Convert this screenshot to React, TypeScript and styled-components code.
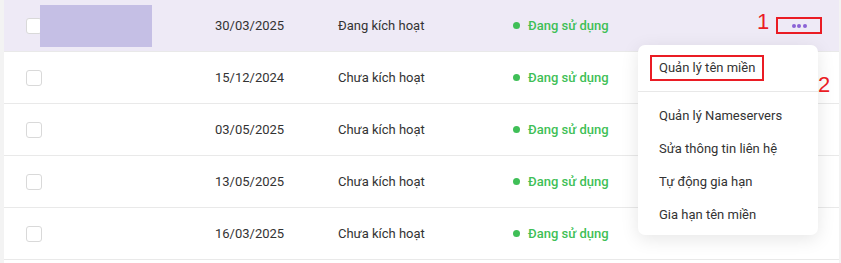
import React from "react";
import styled, { createGlobalStyle } from "styled-components";

const Global = createGlobalStyle`
  html, body { margin: 0; padding: 0; background: #f3f3f3; }
  body { font-family: Roboto, "Liberation Sans", Arial, sans-serif; }
  #root { width: 841px; height: 263px; overflow: hidden; }
`;

const Page = styled.div`
  position: relative;
  width: 835px;
  margin-left: 4px;
  height: 263px;
  background: #fff;
`;

const Row = styled.div<{ $active?: boolean }>`
  display: grid;
  grid-template-columns: 211px 123px 175px 263px 1fr;
  align-items: center;
  height: 51px;
  border-bottom: 1px solid #e9e9e9;
  background: ${(p) => (p.$active ? "#eeeaf6" : "#fff")};
  font-size: 13px;
  color: #333;
`;

const CheckCell = styled.div`
  display: flex;
  align-items: center;
  padding-left: 22px;
`;

const Checkbox = styled.span`
  display: inline-block;
  width: 14px;
  height: 14px;
  border: 1px solid #d9d9d9;
  border-radius: 3px;
  background: #fff;
`;

const Redacted = styled.span`
  display: inline-block;
  width: 112px;
  height: 42px;
  margin-left: -2px;
  background: #c5bfe5;
`;

const Cell = styled.div`
  white-space: nowrap;
`;

const Usage = styled.div`
  display: flex;
  align-items: center;
  gap: 8px;
  color: #3fbf57;
  font-weight: 500;
  white-space: nowrap;
`;

const Dot = styled.span`
  width: 7px;
  height: 7px;
  border-radius: 50%;
  background: #3fbf57;
`;

const ActionCell = styled.div`
  display: flex;
  align-items: center;
`;

const ActionWrap = styled.span`
  position: relative;
  display: inline-flex;
`;

const Mark = styled.span`
  color: #ea1c24;
  font-family: "Liberation Sans", Arial, sans-serif;
  font-size: 22px;
  line-height: 1;
`;

const MarkOne = styled(Mark)`
  position: absolute;
  left: -19px;
  top: -6px;
`;

const DotsBox = styled.span`
  display: flex;
  align-items: center;
  justify-content: center;
  gap: 1.5px;
  width: 42px;
  height: 13px;
  border: 2px solid #ea1c24;
`;

const MiniDot = styled.span`
  width: 4px;
  height: 4px;
  border-radius: 50%;
  background: #8b63d6;
`;

const Menu = styled.div`
  position: absolute;
  left: 634px;
  top: 45px;
  width: 180px;
  padding: 6px 0 4px;
  background: #fff;
  border-radius: 7px;
  box-shadow: 0 4px 18px rgba(0, 0, 0, 0.1);
  font-size: 13px;
  color: #333;
`;

const Item = styled.div`
  height: 33px;
  display: flex;
  align-items: center;
  padding-left: 21px;
  white-space: nowrap;
`;

const Outlined = styled.span`
  border: 2px solid #ea1c24;
  padding: 3px 7px 4px;
  margin-left: -9px;
`;

const Divider = styled.div`
  height: 1px;
  background: #e8e8e8;
  margin: 7px 0;
`;

const MarkTwo = styled(Mark)`
  position: absolute;
  left: 180px;
  top: 29px;
`;

const rows = [
  { date: "30/03/2025", status: "Đang kích hoạt", active: true },
  { date: "15/12/2024", status: "Chưa kích hoạt" },
  { date: "03/05/2025", status: "Chưa kích hoạt" },
  { date: "13/05/2025", status: "Chưa kích hoạt" },
  { date: "16/03/2025", status: "Chưa kích hoạt" },
];

const items = ["Quản lý Nameservers", "Sửa thông tin liên hệ", "Tự động gia hạn", "Gia hạn tên miền"];

export default function App() {
  return (
    <>
      <Global />
      <Page>
        {rows.map((r, i) => (
          <Row key={i} $active={r.active}>
            <CheckCell>
              <Checkbox />
              {r.active && <Redacted />}
            </CheckCell>
            <Cell>{r.date}</Cell>
            <Cell>{r.status}</Cell>
            <Usage>
              <Dot />
              Đang sử dụng
            </Usage>
            <ActionCell>
              {r.active && (
                <ActionWrap>
                  <MarkOne>1</MarkOne>
                  <DotsBox>
                    <MiniDot />
                    <MiniDot />
                    <MiniDot />
                  </DotsBox>
                </ActionWrap>
              )}
            </ActionCell>
          </Row>
        ))}
        <Menu>
          <Item>
            <Outlined>Quản lý tên miền</Outlined>
          </Item>
          <Divider />
          {items.map((t) => (
            <Item key={t}>{t}</Item>
          ))}
          <MarkTwo>2</MarkTwo>
        </Menu>
      </Page>
    </>
  );
}
